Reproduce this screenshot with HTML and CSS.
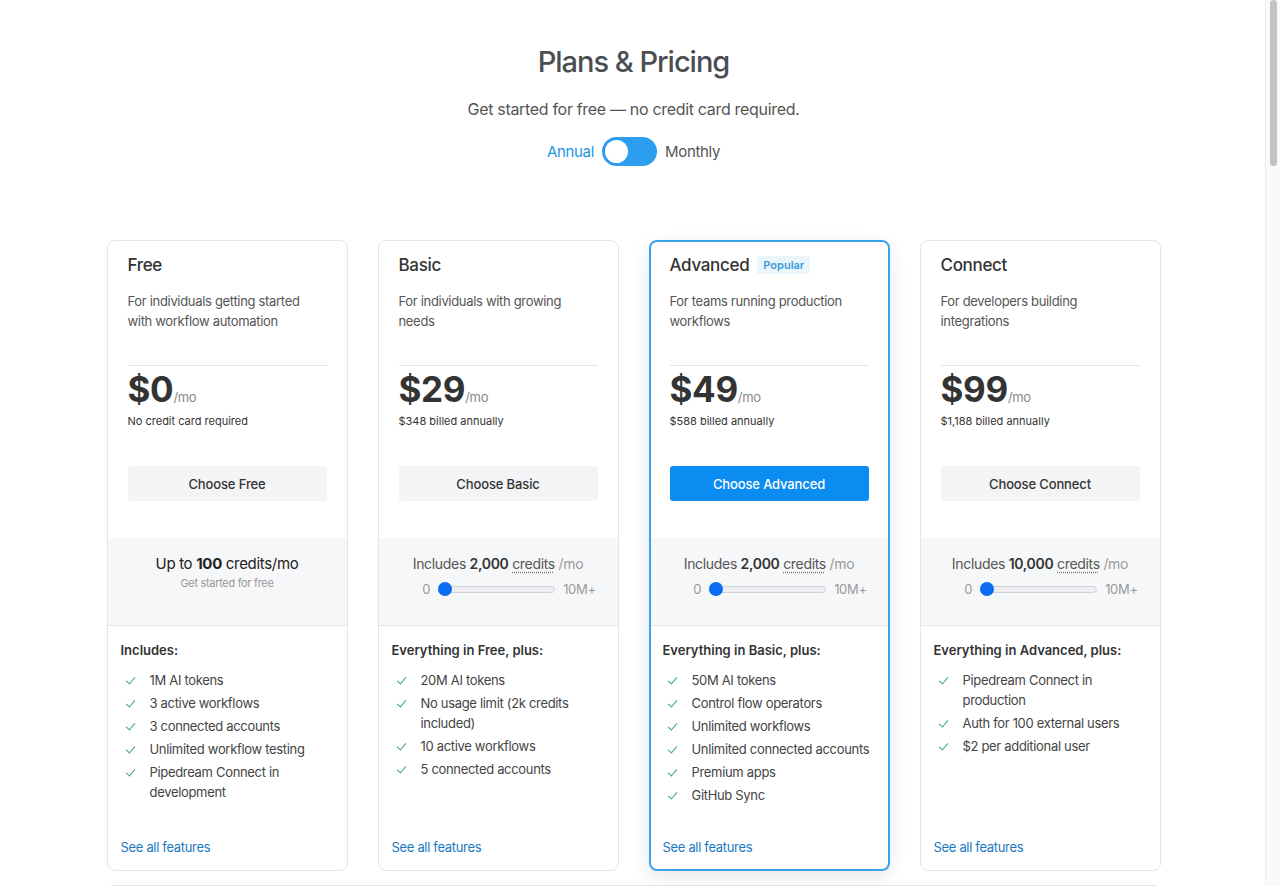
FILE: index.html
```html
<!DOCTYPE html>
<html>
<head>
    <title>Plans &amp; Pricing</title>
    <link rel="stylesheet" href="styles.css">
</head>
<body>
    <div class="page">
        <header class="intro">
            <h1>Plans &amp; Pricing</h1>
            <p class="lead">Get started for free — no credit card required.</p>
            <div class="billing">
                <span class="billing-label active">Annual</span>
                <button class="switch" aria-label="Toggle billing period"><span class="knob"></span></button>
                <span class="billing-label">Monthly</span>
            </div>
        </header>

        <div class="plans">
            <!-- Free -->
            <div class="plan">
                <div class="plan-top">
                    <div class="plan-name">Free</div>
                    <p class="plan-desc">For individuals getting started with workflow automation</p>
                    <div class="price"><span class="amount">$0</span><span class="per">/mo</span></div>
                    <div class="price-note">No credit card required</div>
                    <button class="choose">Choose Free</button>
                </div>
                <div class="credits">
                    <div class="credits-free">Up to <b>100</b> credits/mo</div>
                    <div class="credits-sub">Get started for free</div>
                </div>
                <div class="features">
                    <div class="features-title">Includes:</div>
                    <ul>
                        <li>1M AI tokens</li>
                        <li>3 active workflows</li>
                        <li>3 connected accounts</li>
                        <li>Unlimited workflow testing</li>
                        <li>Pipedream Connect in development</li>
                    </ul>
                    <a class="all" href="#">See all features</a>
                </div>
            </div>

            <!-- Basic -->
            <div class="plan">
                <div class="plan-top">
                    <div class="plan-name">Basic</div>
                    <p class="plan-desc">For individuals with growing needs</p>
                    <div class="price"><span class="amount">$29</span><span class="per">/mo</span></div>
                    <div class="price-note">$348 billed annually</div>
                    <button class="choose">Choose Basic</button>
                </div>
                <div class="credits">
                    <div class="credits-line">Includes <b>2,000</b> <span class="term">credits</span> <span class="muted">/mo</span></div>
                    <div class="range"><span>0</span><span class="track"><span class="thumb"></span></span><span>10M+</span></div>
                </div>
                <div class="features">
                    <div class="features-title">Everything in Free, plus:</div>
                    <ul>
                        <li>20M AI tokens</li>
                        <li>No usage limit (2k credits included)</li>
                        <li>10 active workflows</li>
                        <li>5 connected accounts</li>
                    </ul>
                    <a class="all" href="#">See all features</a>
                </div>
            </div>

            <!-- Advanced -->
            <div class="plan featured">
                <div class="plan-top">
                    <div class="plan-name">Advanced <span class="badge">Popular</span></div>
                    <p class="plan-desc">For teams running production workflows</p>
                    <div class="price"><span class="amount">$49</span><span class="per">/mo</span></div>
                    <div class="price-note">$588 billed annually</div>
                    <button class="choose primary">Choose Advanced</button>
                </div>
                <div class="credits">
                    <div class="credits-line">Includes <b>2,000</b> <span class="term">credits</span> <span class="muted">/mo</span></div>
                    <div class="range"><span>0</span><span class="track"><span class="thumb"></span></span><span>10M+</span></div>
                </div>
                <div class="features">
                    <div class="features-title">Everything in Basic, plus:</div>
                    <ul>
                        <li>50M AI tokens</li>
                        <li>Control flow operators</li>
                        <li>Unlimited workflows</li>
                        <li>Unlimited connected accounts</li>
                        <li>Premium apps</li>
                        <li>GitHub Sync</li>
                    </ul>
                    <a class="all" href="#">See all features</a>
                </div>
            </div>

            <!-- Connect -->
            <div class="plan">
                <div class="plan-top">
                    <div class="plan-name">Connect</div>
                    <p class="plan-desc">For developers building integrations</p>
                    <div class="price"><span class="amount">$99</span><span class="per">/mo</span></div>
                    <div class="price-note">$1,188 billed annually</div>
                    <button class="choose">Choose Connect</button>
                </div>
                <div class="credits">
                    <div class="credits-line">Includes <b>10,000</b> <span class="term">credits</span> <span class="muted">/mo</span></div>
                    <div class="range"><span>0</span><span class="track"><span class="thumb"></span></span><span>10M+</span></div>
                </div>
                <div class="features">
                    <div class="features-title">Everything in Advanced, plus:</div>
                    <ul>
                        <li>Pipedream Connect in production</li>
                        <li>Auth for 100 external users</li>
                        <li>$2 per additional user</li>
                    </ul>
                    <a class="all" href="#">See all features</a>
                </div>
            </div>
        </div>

        <div class="compare"></div>
    </div>

    <!-- window scrollbar -->
    <div class="scrollbar"><div class="scroll-thumb"></div></div>
</body>
</html>
```

FILE: styles.css
```css
* {
    box-sizing: border-box;
}

body {
    margin: 0;
    padding-right: 13px;
    background: #fff;
    font-family: Inter, "Noto Sans", Arial, sans-serif;
    letter-spacing: -0.02em;
    color: #333;
}

.scrollbar {
    position: fixed;
    top: 0;
    right: 0;
    bottom: 0;
    width: 15px;
    background: #fafafa;
    border-left: 1px solid #ededed;
}

.scroll-thumb {
    margin: 0 3px 0 4px;
    height: 166px;
    border-radius: 4px;
    background: #c2c2c2;
}

.page {
    width: 1054px;
    margin: 0 auto;
    padding-bottom: 1200px;
}

/* Heading + billing toggle */
.intro {
    text-align: center;
    padding-top: 44px;
}

.intro h1 {
    margin: 0;
    font-size: 29px;
    line-height: 36px;
    font-weight: 500;
    letter-spacing: -0.035em;
    color: #4a4e53;
}

.lead {
    margin: 17px 0 0;
    font-size: 16px;
    line-height: 24px;
    color: #555;
}

.billing {
    display: flex;
    justify-content: center;
    align-items: center;
    gap: 8px;
    margin-top: 16px;
    font-size: 15px;
    color: #555;
}

.billing-label.active {
    color: #1d96e2;
}

.switch {
    width: 55px;
    height: 29px;
    border: 0;
    border-radius: 15px;
    background: #2d9df0;
    padding: 3px;
    display: flex;
    align-items: center;
}

.knob {
    width: 23px;
    height: 23px;
    border-radius: 50%;
    background: #fff;
}

/* Plan cards */
.plans {
    display: grid;
    grid-template-columns: repeat(4, 1fr);
    gap: 30px;
    margin-top: 74px;
}

.plan {
    height: 631px;
    border: 1px solid #e3e5e8;
    border-radius: 8px;
    display: flex;
    flex-direction: column;
    overflow: hidden;
    background: #fff;
}

.plan.featured {
    border: 2px solid #3ca2ea;
    box-shadow: 0 6px 18px rgba(0, 0, 0, 0.1);
}

.plan-top {
    padding: 14px 20px 37px;
}

.featured .plan-top {
    padding: 13px 19px 37px;
}

.plan-name {
    font-size: 17px;
    line-height: 20px;
    font-weight: 500;
    color: #333;
    display: flex;
    align-items: center;
    gap: 8px;
}

.badge {
    font-size: 11px;
    line-height: 18px;
    font-weight: 600;
    letter-spacing: 0;
    color: #3b9ddc;
    background: #eaf5fc;
    padding: 0 6px;
    border-radius: 3px;
}

.plan-desc {
    margin: 16px 0 0;
    height: 40px;
    font-size: 13px;
    line-height: 20px;
    color: #555;
    padding-bottom: 34px;
    box-sizing: content-box;
    border-bottom: 1px solid #e3e5e8;
}

.price {
    display: flex;
    align-items: baseline;
    height: 36px;
    margin-top: 5px;
}

.amount {
    font-size: 35px;
    line-height: 36px;
    font-weight: 700;
    color: #333;
}

.per {
    font-size: 13px;
    line-height: 1;
    color: #888;
}

.price-note {
    margin-top: 6px;
    font-size: 11px;
    line-height: 16px;
    letter-spacing: 0;
    color: #333;
}

.choose {
    display: block;
    width: 100%;
    height: 35px;
    margin-top: 37px;
    border: 0;
    border-radius: 3px;
    background: #f3f4f6;
    font-family: inherit;
    font-size: 13px;
    font-weight: 500;
    letter-spacing: -0.01em;
    color: #333;
}

.choose.primary {
    background: #0b8cf0;
    color: #fff;
}

/* Credits band */
.credits {
    height: 88px;
    background: #f6f7f9;
    border-bottom: 1px solid #e3e5e8;
    text-align: center;
    padding-top: 16px;
}

.credits-line {
    font-size: 14px;
    line-height: 20px;
    color: #555;
}

.credits-line b {
    font-weight: 600;
    color: #333;
}

.term {
    text-decoration: underline dotted #777;
    text-underline-offset: 3px;
}

.muted {
    color: #999;
}

.range {
    display: flex;
    justify-content: center;
    align-items: center;
    gap: 8px;
    margin: 7px 0 0 22px;
    height: 16px;
    font-size: 13px;
    color: #999;
}

.track {
    position: relative;
    width: 117px;
    height: 7px;
    border: 1px solid #cfd3d8;
    border-radius: 4px;
    background: #eceef1;
}

.thumb {
    position: absolute;
    left: -1px;
    top: -5px;
    width: 14px;
    height: 14px;
    border-radius: 50%;
    background: #0a6cf0;
}

.credits-free {
    font-size: 15px;
    line-height: 20px;
    color: #222;
}

.credits-free b {
    font-weight: 700;
}

.credits-sub {
    font-size: 11px;
    line-height: 16px;
    color: #999;
    margin-top: 1px;
}

/* Feature list */
.features {
    flex: 1;
    display: flex;
    flex-direction: column;
    padding: 14px 13px 13px;
}

.featured .features {
    padding: 14px 12px 12px;
}

.features-title {
    font-size: 13px;
    line-height: 20px;
    font-weight: 600;
    color: #333;
    letter-spacing: 0;
}

.features ul {
    list-style: none;
    margin: 10px 0 0;
    padding: 0;
}

.features li {
    position: relative;
    padding-left: 29px;
    font-size: 13px;
    line-height: 20px;
    color: #444;
    margin-bottom: 3px;
}

.features li::before {
    content: "";
    position: absolute;
    left: 7px;
    top: 5px;
    width: 4px;
    height: 8px;
    border-right: 1.5px solid #3aa37c;
    border-bottom: 1.5px solid #3aa37c;
    transform: rotate(40deg);
    transform-origin: 50% 50%;
}

.all {
    margin-top: auto;
    font-size: 13px;
    line-height: 20px;
    color: #1a79c2;
    text-decoration: none;
}

.compare {
    margin: 14px 4px 0;
    height: 60px;
    border-top: 1px solid #e3e5e8;
}
```
